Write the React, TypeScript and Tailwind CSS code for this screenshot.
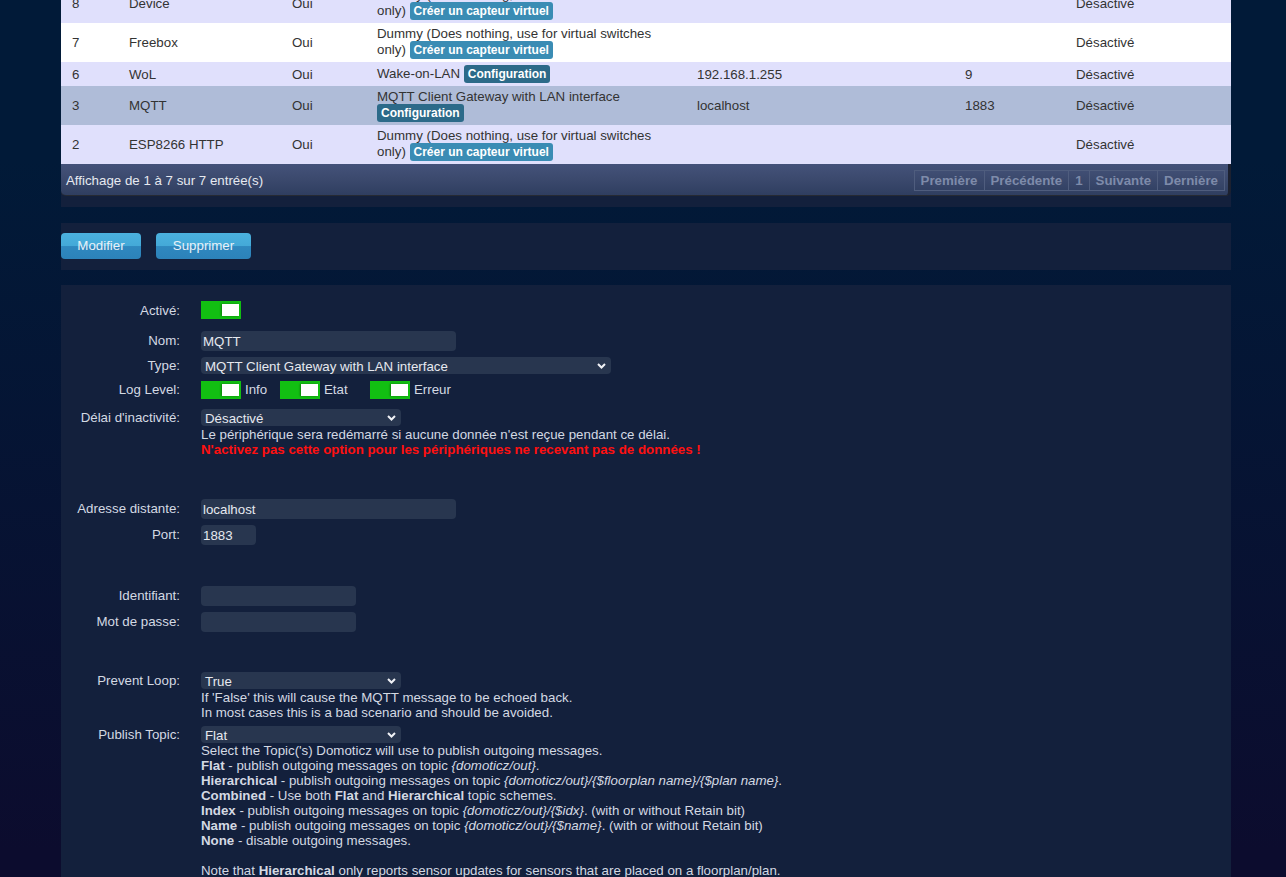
import React from 'react'

type Row = {
  idx: string
  name: string
  line1: string
  line2?: string
  btn: string
  dark?: boolean
  addr: string
  port: string
  bg: string
}

const rows: Row[] = [
  { idx: '8', name: 'Device', line1: 'Dummy (Does nothing, use for virtual switches', line2: 'only)', btn: 'Créer un capteur virtuel', addr: '', port: '', bg: 'bg-[#e0e0fc]' },
  { idx: '7', name: 'Freebox', line1: 'Dummy (Does nothing, use for virtual switches', line2: 'only)', btn: 'Créer un capteur virtuel', addr: '', port: '', bg: 'bg-white' },
  { idx: '6', name: 'WoL', line1: 'Wake-on-LAN', btn: 'Configuration', dark: true, addr: '192.168.1.255', port: '9', bg: 'bg-[#e0e0fc]' },
  { idx: '3', name: 'MQTT', line1: 'MQTT Client Gateway with LAN interface', line2: '', btn: 'Configuration', dark: true, addr: 'localhost', port: '1883', bg: 'bg-[#afbcd8]' },
  { idx: '2', name: 'ESP8266 HTTP', line1: 'Dummy (Does nothing, use for virtual switches', line2: 'only)', btn: 'Créer un capteur virtuel', addr: '', port: '', bg: 'bg-[#e0e0fc]' },
]

function Badge({ label, dark }: { label: string; dark?: boolean }) {
  return (
    <span
      className={`inline-block h-[18px] rounded-[3px] px-[4px] align-middle text-[12px] font-bold leading-[18px] text-white ${
        dark ? 'bg-[#2c6a89]' : 'bg-[#3a8cb4]'
      }`}
    >
      {label}
    </span>
  )
}

function Toggle() {
  return (
    <span className="inline-flex h-[18px] w-[40px] shrink-0 items-center justify-end bg-[#12bf12] pr-[2px]">
      <span className="h-[12px] w-[17px] bg-white shadow-[-1px_0_2px_rgba(0,0,0,0.35)]" />
    </span>
  )
}

function Select({ value, width }: { value: string; width: string }) {
  return (
    <div className={`flex h-[17px] items-center justify-between rounded-[4px] bg-[#28364f] pl-[4px] pr-[5px] text-[13.3px] text-[#e6e9ef] ${width}`}>
      <span className="pt-[1px]">{value}</span>
      <svg width="9" height="6" viewBox="0 0 9 6">
        <path d="M1 1l3.5 3.5L8 1" stroke="#f0f2f6" strokeWidth="2" fill="none" />
      </svg>
    </div>
  )
}

function Input({ value, width }: { value?: string; width: string }) {
  return (
    <div className={`flex h-[20px] items-center rounded-[4px] bg-[#28364f] pl-[2px] text-[13.3px] text-[#e6e9ef] ${width}`}>
      {value}
    </div>
  )
}

function FormRow({ label, mt, h, children }: { label: string; mt: string; h: string; children: React.ReactNode }) {
  return (
    <div className={`flex items-start ${mt}`}>
      <div className={`w-[120px] shrink-0 pr-[1px] text-right ${h}`}>{label}</div>
      <div className="ml-[20px] flex-1">{children}</div>
    </div>
  )
}

export default function App() {
  return (
    <div className="min-h-screen bg-[linear-gradient(180deg,#011a38_0px,#011a38_160px,#0c0c2e_850px)] pl-[61px] font-['Liberation_Sans',Arial,sans-serif]">
      <div className="w-[1170px]">
        {/* Device table */}
        <div className="bg-[#13203c] pb-[11px]">
          <div className="overflow-hidden">
            <table className="-mt-[16px] w-full table-fixed border-collapse text-[13.3px] text-[#333]">
              <colgroup>
                <col className="w-[58px]" />
                <col className="w-[163px]" />
                <col className="w-[85px]" />
                <col className="w-[320px]" />
                <col className="w-[268px]" />
                <col className="w-[111px]" />
                <col />
              </colgroup>
              <tbody>
                {rows.map(r => (
                  <tr key={r.idx} className={r.bg}>
                    <td className="py-[3px] pl-[11px] align-middle leading-[15px]">{r.idx}</td>
                    <td className="py-[3px] pl-[10px] align-middle leading-[15px]">{r.name}</td>
                    <td className="py-[3px] pl-[10px] align-middle leading-[15px]">Oui</td>
                    <td className="whitespace-nowrap py-[3px] pl-[10px] align-middle leading-[15px]">
                      {r.line2 === undefined ? (
                        <>
                          {r.line1} <Badge label={r.btn} dark={r.dark} />
                        </>
                      ) : (
                        <>
                          {r.line1}
                          <br />
                          {r.line2 ? r.line2 + ' ' : ''}
                          <Badge label={r.btn} dark={r.dark} />
                        </>
                      )}
                    </td>
                    <td className="py-[3px] pl-[10px] align-middle leading-[15px]">{r.addr}</td>
                    <td className="py-[3px] pl-[10px] align-middle leading-[15px]">{r.port}</td>
                    <td className="py-[3px] pl-[10px] align-middle leading-[15px]">Désactivé</td>
                  </tr>
                ))}
              </tbody>
            </table>
          </div>
          <div className="flex h-[32px] items-center justify-between rounded-b-[5px] border-b border-r-[3px] border-b-[#262a33] border-r-[#1c2130] bg-[linear-gradient(180deg,#44527a_0%,#3c4a6e_45%,#2f3e60_100%)] pl-[5px] pr-[3px] pt-[2px]">
            <span className="text-[13.3px] text-[#e6e9f0]">Affichage de 1 à 7 sur 7 entrée(s)</span>
            <div className="flex h-[21px] border border-[#4f5d7e] text-[13.3px] font-bold text-[#7e8baa]">
              <span className="flex items-center border-r border-[#4f5d7e] px-[6px]">Première</span>
              <span className="flex items-center border-r border-[#4f5d7e] px-[6px]">Précédente</span>
              <span className="flex items-center border-r border-[#4f5d7e] px-[6px]">1</span>
              <span className="flex items-center border-r border-[#4f5d7e] px-[6px]">Suivante</span>
              <span className="flex items-center px-[6px]">Dernière</span>
            </div>
          </div>
        </div>

        {/* Actions */}
        <div className="mt-[16px] flex h-[47px] gap-[15px] bg-[#13203c] pt-[10px]">
          <button className="h-[26px] w-[80px] rounded-[4px] bg-[linear-gradient(180deg,#4bb1de_0%,#44a9d8_50%,#2f88bf_52%,#2c82b9_100%)] text-[13.3px] text-[#e8f1f8]">
            Modifier
          </button>
          <button className="h-[26px] w-[95px] rounded-[4px] bg-[linear-gradient(180deg,#4bb1de_0%,#44a9d8_50%,#2f88bf_52%,#2c82b9_100%)] text-[13.3px] text-[#e8f1f8]">
            Supprimer
          </button>
        </div>

        {/* Hardware settings */}
        <div className="mt-[15px] bg-[#13203c] pb-[60px] pt-[16px] text-[13.3px] leading-[15px] text-[#d3d9e3]">
          <FormRow label="Activé:" mt="mt-0" h="leading-[19px]">
            <Toggle />
          </FormRow>
          <FormRow label="Nom:" mt="mt-[11px]" h="leading-[20px]">
            <Input value="MQTT" width="w-[255px]" />
          </FormRow>
          <FormRow label="Type:" mt="mt-[6px]" h="leading-[17px]">
            <Select value="MQTT Client Gateway with LAN interface" width="w-[410px]" />
          </FormRow>
          <FormRow label="Log Level:" mt="mt-[6px]" h="leading-[19px]">
            <div className="flex items-center pt-[1px] leading-[18px]">
              <div className="flex w-[79px] items-center gap-[4px]">
                <Toggle />
                <span>Info</span>
              </div>
              <div className="flex w-[90px] items-center gap-[4px]">
                <Toggle />
                <span>Etat</span>
              </div>
              <div className="flex items-center gap-[4px]">
                <Toggle />
                <span>Erreur</span>
              </div>
            </div>
          </FormRow>
          <FormRow label="Délai d'inactivité:" mt="mt-[10px]" h="leading-[17px]">
            <Select value="Désactivé" width="w-[200px]" />
            <div className="mt-[1px]">Le périphérique sera redémarré si aucune donnée n'est reçue pendant ce délai.</div>
            <div className="font-bold text-[#ff1010]">N'activez pas cette option pour les périphériques ne recevant pas de données !</div>
          </FormRow>
          <FormRow label="Adresse distante:" mt="mt-[42px]" h="leading-[20px]">
            <Input value="localhost" width="w-[255px]" />
          </FormRow>
          <FormRow label="Port:" mt="mt-[6px]" h="leading-[20px]">
            <Input value="1883" width="w-[55px]" />
          </FormRow>
          <FormRow label="Identifiant:" mt="mt-[41px]" h="leading-[20px]">
            <Input width="w-[155px]" />
          </FormRow>
          <FormRow label="Mot de passe:" mt="mt-[6px]" h="leading-[20px]">
            <Input width="w-[155px]" />
          </FormRow>
          <FormRow label="Prevent Loop:" mt="mt-[40px]" h="leading-[17px]">
            <Select value="True" width="w-[200px]" />
            <div className="mt-[1px]">If 'False' this will cause the MQTT message to be echoed back.</div>
            <div>In most cases this is a bad scenario and should be avoided.</div>
          </FormRow>
          <FormRow label="Publish Topic:" mt="mt-[6px]" h="leading-[17px]">
            <Select value="Flat" width="w-[200px]" />
            <div>Select the Topic('s) Domoticz will use to publish outgoing messages.</div>
            <div>
              <b>Flat</b> - publish outgoing messages on topic <i>{'{domoticz/out}'}</i>.
            </div>
            <div>
              <b>Hierarchical</b> - publish outgoing messages on topic <i>{'{domoticz/out}/{$floorplan name}/{$plan name}'}</i>.
            </div>
            <div>
              <b>Combined</b> - Use both <b>Flat</b> and <b>Hierarchical</b> topic schemes.
            </div>
            <div>
              <b>Index</b> - publish outgoing messages on topic <i>{'{domoticz/out}/{$idx}'}</i>. (with or without Retain bit)
            </div>
            <div>
              <b>Name</b> - publish outgoing messages on topic <i>{'{domoticz/out}/{$name}'}</i>. (with or without Retain bit)
            </div>
            <div>
              <b>None</b> - disable outgoing messages.
            </div>
            <div className="h-[15px]" />
            <div>
              Note that <b>Hierarchical</b> only reports sensor updates for sensors that are placed on a floorplan/plan.
            </div>
          </FormRow>
        </div>
      </div>
    </div>
  )
}
